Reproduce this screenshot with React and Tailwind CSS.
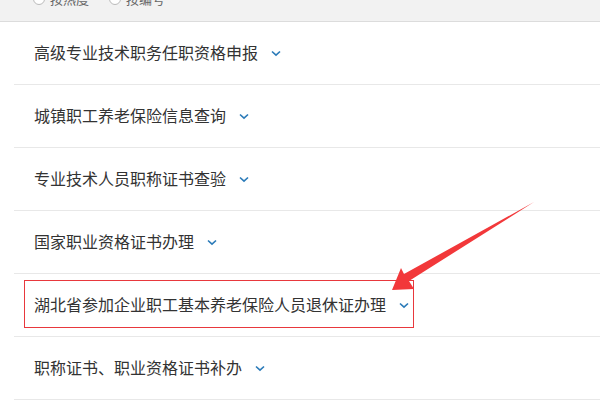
import React from "react";

const items = [
  "高级专业技术职务任职资格申报",
  "城镇职工养老保险信息查询",
  "专业技术人员职称证书查验",
  "国家职业资格证书办理",
  "湖北省参加企业职工基本养老保险人员退休证办理",
  "职称证书、职业资格证书补办",
];

const Chevron = () => (
  <svg width="10" height="7" viewBox="0 0 10 7" className="ml-[13px] mt-[3px]">
    <path d="M1 1.5 L5 5.2 L9 1.5" fill="none" stroke="#2b7bb9" strokeWidth="1.6" />
  </svg>
);

const Radio = ({ label }) => (
  <div className="flex items-center gap-[5px]">
    <span className="w-[12px] h-[12px] rounded-full border border-[#bbb] bg-white" />
    <span className="text-[13px] text-[#666]">{label}</span>
  </div>
);

export default function App() {
  return (
    <div
      className="relative w-[600px] h-[400px] overflow-hidden bg-white"
      style={{ fontFamily: '"Noto Sans CJK SC", "Liberation Sans", sans-serif' }}
    >
      <div className="h-[22px] bg-[#f2f2f2] border-b border-[#dcdcdc] overflow-hidden">
        <div className="flex gap-[20px] pl-[33px] -mt-[11px]">
          <Radio label="按热度" />
          <Radio label="按编号" />
        </div>
      </div>
      <div className="pl-[14px]">
        {items.map((t) => (
          <div key={t} className="h-[63px] border-b border-[#e8e8e8] flex items-center pl-[20px] pb-[3px]">
            <span className="text-[16px] text-[#333] leading-none">{t}</span>
            <Chevron />
          </div>
        ))}
      </div>
      <div className="absolute left-[24px] top-[280px] w-[390px] h-[48px] border border-[#e8383d]" />
      <svg className="absolute left-0 top-0" width="600" height="400">
        <polygon
          points="534,202 409,281 414,289 392,290 401,268 404,274"
          fill="#f2383a"
        />
      </svg>
    </div>
  );
}
